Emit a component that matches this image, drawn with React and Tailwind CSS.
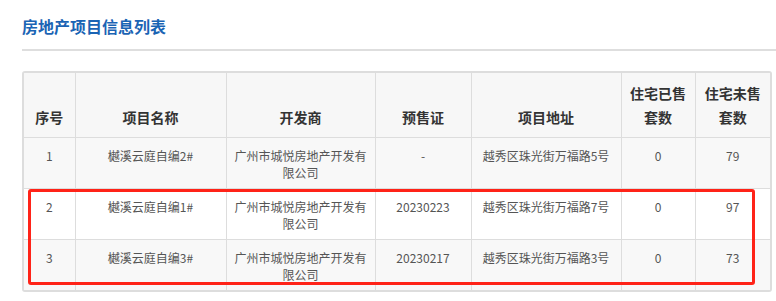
import React from "react";

const rows = [
  { no: "1", name: "樾溪云庭自编2#", dev: "广州市城悦房地产开发有限公司", cert: "-", addr: "越秀区珠光街万福路5号", sold: "0", unsold: "79" },
  { no: "2", name: "樾溪云庭自编1#", dev: "广州市城悦房地产开发有限公司", cert: "20230223", addr: "越秀区珠光街万福路7号", sold: "0", unsold: "97" },
  { no: "3", name: "樾溪云庭自编3#", dev: "广州市城悦房地产开发有限公司", cert: "20230217", addr: "越秀区珠光街万福路3号", sold: "0", unsold: "73" },
];

const widths = [51, 151, 149, 96, 150, 74, 75];

export default function App() {
  const font = { fontFamily: '"Noto Sans CJK SC", "Noto Sans", sans-serif' };
  return (
    <div className="relative w-[776px] h-[301px] bg-white overflow-hidden pl-[22px]" style={font}>
      <div className="pt-[14px] h-[49px]">
        <h1 className="text-[16px] leading-[24px] font-bold text-[#1a64b4]">房地产项目信息列表</h1>
      </div>
      <div className="h-[2px] bg-[#dedede]" />
      <div className="mt-[20px] w-[750px] border-2 border-[#dddddd] rounded-[3px] overflow-hidden">
        <table className="table-fixed border-collapse w-[746px]">
          <colgroup>
            {widths.map((w, i) => (
              <col key={i} style={{ width: w }} />
            ))}
          </colgroup>
          <thead>
            <tr className="bg-[#f7f7f7] h-[64px]">
              {["序号", "项目名称", "开发商", "预售证", "项目地址", "住宅已售套数", "住宅未售套数"].map((h, i) => (
                <th
                  key={i}
                  className={`align-bottom pb-[8px] px-[6px] text-[14px] leading-[24px] font-bold text-[#333333] text-center border-[#dddddd] border-b ${i > 0 ? "border-l" : ""}`}
                >
                  {h}
                </th>
              ))}
            </tr>
          </thead>
          <tbody>
            {rows.map((r, ri) => (
              <tr key={ri} className={`h-[51px] ${ri % 2 === 0 ? "bg-[#f8f8f8]" : "bg-white"}`}>
                {[r.no, r.name, r.dev, r.cert, r.addr, r.sold, r.unsold].map((c, i) => (
                  <td
                    key={i}
                    className={`align-top pt-[9px] px-[8px] text-[12px] leading-[17px] text-[#555555] text-center border-[#dddddd] ${ri < 2 ? "border-b" : ""} ${i > 0 ? "border-l" : ""}`}
                  >
                    {c}
                  </td>
                ))}
              </tr>
            ))}
          </tbody>
        </table>
      </div>
      <div className="absolute left-[28px] top-[189px] w-[727px] h-[96px] border-[3px] border-[#ff2318] rounded-[3px] pointer-events-none" />
    </div>
  );
}
